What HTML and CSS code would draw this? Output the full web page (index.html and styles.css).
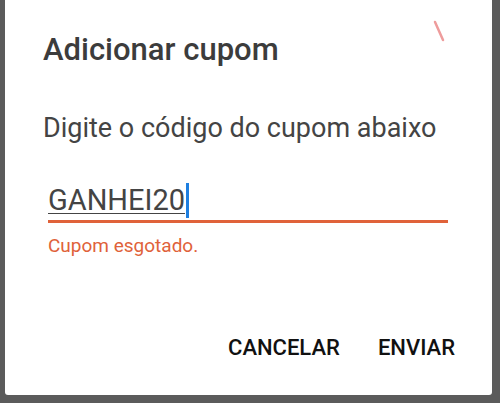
FILE: index.html
```html
<!DOCTYPE html>
<html lang="pt">
<head>
    <meta charset="UTF-8">
    <meta name="viewport" content="width=device-width, initial-scale=1.0">
    <title>Adicionar cupom</title>
    <link rel="stylesheet" href="styles.css">
</head>
<body>
    <div class="backdrop">
        <div class="dialog">
            <h1 class="title">Adicionar cupom</h1>
            <p class="message">Digite o código do cupom abaixo</p>
            <div class="field">
                <span class="value">GANHEI20</span><span class="caret"></span>
            </div>
            <p class="error">Cupom esgotado.</p>
            <div class="actions">
                <button class="action">CANCELAR</button>
                <button class="action">ENVIAR</button>
            </div>
            <svg class="mark" width="14" height="24" viewBox="0 0 14 24">
                <path d="M2 2 L10 20" stroke="#ee9c9c" stroke-width="2.5" stroke-linecap="round" fill="none"/>
            </svg>
        </div>
    </div>
</body>
</html>
```

FILE: styles.css
```css
body {
    margin: 0;
    background-color: #5b5b5b;
    font-family: Roboto, "Noto Sans", sans-serif;
}

.backdrop {
    width: 500px;
    height: 403px;
    overflow: hidden;
}

.dialog {
    position: relative;
    margin-left: 5px;
    width: 487px;
    height: 395px;
    background-color: #fff;
    border-radius: 0 0 3px 3px;
    box-sizing: border-box;
    padding: 30px 44px 0 38px;
}

.title {
    margin: 0;
    font-size: 31px;
    font-weight: 500;
    color: #3c3c3c;
    line-height: 40px;
}

.message {
    margin: 40px 0 0;
    font-size: 27px;
    color: #444;
    line-height: 36px;
}

.field {
    margin: 34px 0 0 5px;
    border-bottom: 3px solid #e0623a;
    height: 40px;
    display: flex;
    align-items: center;
}

.value {
    font-size: 29px;
    color: #444;
    line-height: 36px;
    text-decoration: underline;
    text-decoration-thickness: 1px;
    text-underline-offset: 3px;
}

.caret {
    width: 3px;
    height: 35px;
    background-color: #1e7fe0;
    margin-left: 1px;
}

.error {
    margin: 11px 0 0 5px;
    font-size: 19px;
    line-height: 24px;
    color: #e0623a;
}

.actions {
    display: flex;
    justify-content: flex-end;
    gap: 38px;
    margin-top: 76px;
    margin-right: -7px;
}

.action {
    border: none;
    background: none;
    padding: 0;
    font-family: Roboto, "Noto Sans", sans-serif;
    font-size: 22px;
    line-height: 28px;
    font-weight: 500;
    color: #111;
}

.mark {
    position: absolute;
    left: 428px;
    top: 20px;
}
```
